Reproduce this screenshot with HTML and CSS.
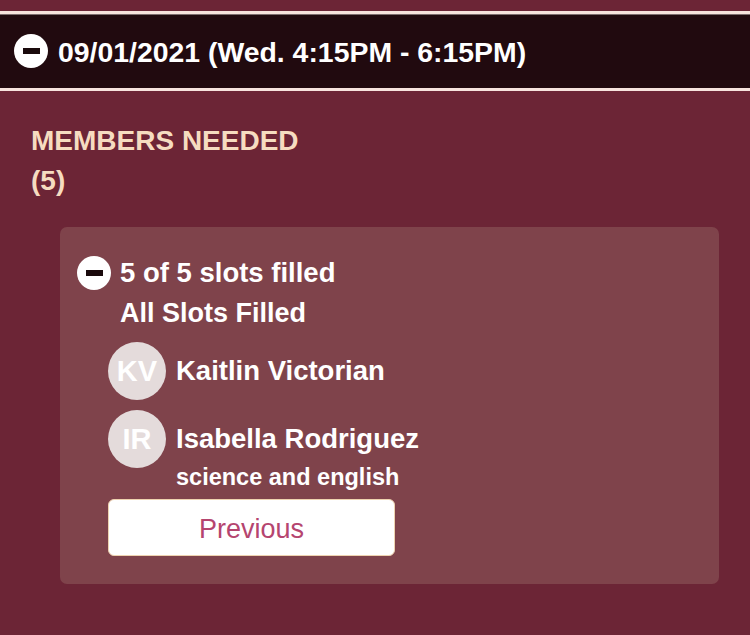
FILE: index.html
```html
<!DOCTYPE html>
<html>
<head>
<meta charset="utf-8">
<link rel="stylesheet" href="styles.css">
</head>
<body>
<div class="top-gap"></div>
<div class="header">
  <span class="minus-icon minus-icon--lg"><span class="bar"></span></span>
  <span class="header-text">09/01/2021 (Wed. 4:15PM - 6:15PM)</span>
</div>
<section class="section">
  <h2 class="title">MEMBERS NEEDED<br>(5)</h2>
  <div class="card">
    <div class="slots-row">
      <span class="minus-icon"><span class="bar"></span></span>
      <span class="slots-text">5 of 5 slots filled</span>
    </div>
    <div class="status">All Slots Filled</div>
    <div class="members">
      <div class="member">
        <span class="avatar">KV</span>
        <div class="member-info">
          <div class="member-name">Kaitlin Victorian</div>
        </div>
      </div>
      <div class="member">
        <span class="avatar">IR</span>
        <div class="member-info">
          <div class="member-name">Isabella Rodriguez</div>
          <div class="member-note">science and english</div>
        </div>
      </div>
    </div>
    <button class="prev-btn">Previous</button>
  </div>
</section>
</body>
</html>
```

FILE: styles.css
```css
html, body {
  margin: 0;
  padding: 0;
}
body {
  background: #6c2536;
  font-family: "Liberation Sans", Arial, sans-serif;
  color: #fff;
  height: 635px;
  overflow: hidden;
}
.top-gap {
  height: 11px;
}
.header {
  display: flex;
  align-items: center;
  gap: 10px;
  height: 74px;
  padding-left: 14px;
  background: #210a0f;
  border-top: 3px solid #f8e4de;
  border-bottom: 3px solid #f8e4de;
  box-shadow: inset 0 1px 0 #7d6d6e;
}
.minus-icon {
  width: 34px;
  height: 34px;
  border-radius: 50%;
  background: #fff;
  display: flex;
  align-items: center;
  justify-content: center;
  flex: none;
}
.minus-icon .bar {
  width: 17px;
  height: 6px;
  background: #1a0a0c;
}
.header-text {
  font-size: 28.4px;
  font-weight: bold;
  padding-top: 3px;
}
.section {
  padding: 30px 31px 0;
}
.title {
  margin: 0;
  color: #f6dcc0;
  font-size: 28px;
  line-height: 40px;
  font-weight: bold;
}
.card {
  margin: 26px 0 0 29px;
  background: #7f434b;
  border-radius: 7px;
  padding: 26px 17px 28px;
}
.slots-row {
  display: flex;
  align-items: center;
  gap: 9px;
  height: 40px;
}
.slots-text {
  font-size: 27.5px;
  font-weight: bold;
  line-height: 40px;
}
.status {
  font-size: 27px;
  font-weight: bold;
  line-height: 40px;
  padding-left: 43px;
}
.members {
  margin: 9px 0 0 31px;
  display: flex;
  flex-direction: column;
  gap: 10px;
}
.member {
  display: flex;
  gap: 10px;
  align-items: flex-start;
}
.avatar {
  width: 58px;
  height: 58px;
  border-radius: 50%;
  background: #e4dbdb;
  color: #fff;
  font-size: 29px;
  font-weight: bold;
  display: flex;
  align-items: center;
  justify-content: center;
  flex: none;
}
.member-name {
  font-size: 27.5px;
  font-weight: bold;
  line-height: 58px;
}
.member-note {
  font-size: 23.5px;
  font-weight: bold;
  line-height: 18px;
}
.prev-btn {
  display: block;
  margin: 13px 0 0 31px;
  width: 287px;
  height: 57px;
  background: #fff;
  border: 1px solid #eed3b0;
  border-radius: 6px;
  color: #b5456f;
  font-family: "Liberation Sans", Arial, sans-serif;
  font-size: 27px;
  padding: 3px 0 0;
}
```
